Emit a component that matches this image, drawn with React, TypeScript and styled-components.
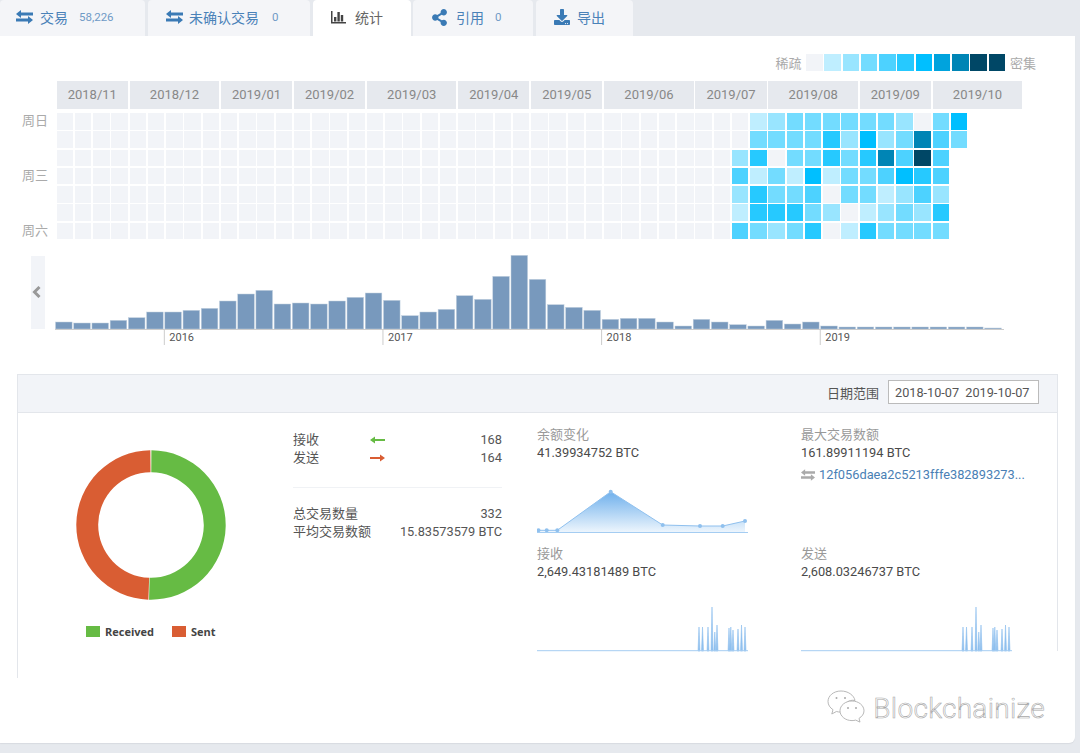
import React from "react";
import styled, { createGlobalStyle } from "styled-components";
import { FaShareAlt, FaDownload } from "react-icons/fa";

const Global = createGlobalStyle`
  html, body { margin: 0; padding: 0; background: #e6e9ee; }
  body { width: 1080px; height: 753px; overflow: hidden; font-family: Roboto, "Noto Sans CJK SC", sans-serif; font-size: 13px; color: #555; }
`;

const LEVELS = ["#f2f4f8", "#bfeeff", "#99e5ff", "#73dcff", "#4dd2ff", "#26c9ff", "#00bfff", "#00a3dd", "#0085b5", "#004766", "#004766"];
const CELL = 16.5;
const GAP = 1.75;

const Page = styled.div`
  width: 1080px;
  height: 753px;
  display: flex;
  flex-direction: column;
`;
const TabBar = styled.nav`
  display: flex;
  height: 36px;
`;
const Tab = styled.div<{ $w: number; $gap: number; $pad?: number; $active?: boolean }>`
  width: ${(p) => p.$w}px;
  margin-right: ${(p) => p.$gap}px;
  box-sizing: border-box;
  padding: 0 0 2px ${(p) => p.$pad ?? 18}px;
  display: flex;
  align-items: center;
  background: ${(p) => (p.$active ? "#fff" : "#f4f5f8")};
  color: ${(p) => (p.$active ? "#666" : "#4a82b8")};
  border-radius: 4px 4px 0 0;
  font-size: 14px;
  svg { flex: none; color: ${(p) => (p.$active ? "#444" : "#3a7ab5")}; }
`;
const TabLabel = styled.span<{ $m: number }>`
  margin-left: ${(p) => p.$m}px;
`;
const TabCount = styled.span<{ $m?: number }>`
  margin-left: ${(p) => p.$m ?? 11}px;
  font-size: 11.5px;
  color: #6f9ac6;
`;
const Card = styled.main`
  width: 1075px;
  height: 707px;
  background: #fff;
  border-radius: 0 0 6px 0;
  box-shadow: 0 1px 1px #d8dbe0;
`;
const LegendRow = styled.div`
  display: flex;
  justify-content: flex-end;
  align-items: center;
  gap: ${GAP}px;
  padding: 18px 39px 0 0;
  height: ${CELL}px;
  color: #aaa;
`;
const LegendText = styled.span<{ $side: "l" | "r" }>`
  margin-${(p) => (p.$side === "l" ? "right" : "left")}: 3px;
`;
const Cell = styled.div<{ $level: number }>`
  width: ${CELL}px;
  height: ${CELL}px;
  flex: none;
  background: ${(p) => LEVELS[p.$level]};
`;
const Months = styled.div`
  display: grid;
  grid-template-columns: repeat(53, ${CELL}px);
  column-gap: ${GAP}px;
  margin: 10.5px 0 0 56.7px;
  height: 27.5px;
`;
const Month = styled.div<{ $span: number }>`
  grid-column: span ${(p) => p.$span};
  background: #e6e9ee;
  color: #888;
  display: flex;
  align-items: center;
  justify-content: center;
  font-size: 13px;
`;
const Heat = styled.div`
  margin-top: 4.5px;
  display: flex;
  flex-direction: column;
  gap: ${GAP}px;
`;
const HeatRow = styled.div`
  display: flex;
  gap: ${GAP}px;
`;
const DayLabel = styled.div`
  width: ${56.7 - GAP}px;
  box-sizing: border-box;
  padding-left: 22px;
  line-height: ${CELL}px;
  color: #aaa;
  flex: none;
`;
const History = styled.section`
  display: flex;
  margin: 15.8px 0 0 31px;
`;
const PrevButton = styled.div`
  width: 14px;
  height: 73px;
  box-sizing: border-box;
  padding-right: 3px;
  margin: 1px 10px 0 0;
  background: #f2f4f8;
  color: #999;
  display: flex;
  align-items: center;
  justify-content: center;
`;
const Chart = styled.svg`
  display: block;
  text { font-family: Roboto, sans-serif; font-size: 11px; fill: #555; }
`;
const Panel = styled.section`
  width: 1041px;
  height: 304px;
  margin: 27px 0 0 17px;
  box-sizing: border-box;
  border-left: 1px solid #e3e6eb;
`;
const PanelHeader = styled.header`
  height: 39px;
  box-sizing: border-box;
  border: 1px solid #e3e6eb;
  border-left: 0;
  background: #f2f4f8;
  display: flex;
  align-items: center;
  justify-content: flex-end;
  gap: 9px;
  padding: 0 18px 2px 0;
`;
const DateInput = styled.input`
  width: 151px;
  height: 24px;
  box-sizing: border-box;
  border: 1px solid #bbb;
  background: #fff;
  padding: 0 0 0 6px;
  font: 12.7px Roboto, sans-serif;
  color: #555;
`;
const PanelBody = styled.div`
  display: flex;
  height: 238px;
  border-right: 1px solid #e3e6eb;
`;
const DonutColumn = styled.div`
  width: 275px;
  flex: none;
  padding: 37px 0 0 58px;
  box-sizing: border-box;
`;
const DonutSvg = styled.svg`
  display: block;
`;
const DonutLegend = styled.div`
  display: flex;
  align-items: center;
  margin: 24px 0 0 10px;
  font: 700 11px "Open Sans", sans-serif;
  color: #444;
`;
const Swatch = styled.i<{ $color: string }>`
  width: 14px;
  height: 11px;
  background: ${(p) => p.$color};
  margin-right: 5px;
`;
const SwatchLabel = styled.span`
  width: 67px;
`;
const StatsColumn = styled.div`
  width: 209px;
  flex: none;
  padding-top: 18px;
  box-sizing: border-box;
  line-height: 18px;
`;
const StatRow = styled.div`
  display: flex;
  align-items: center;
  justify-content: space-between;
`;
const StatLabel = styled.span`
  display: flex;
  align-items: center;
`;
const LabelBox = styled.span`
  width: 77px;
`;
const StatValue = styled.span`
  font-size: 12.8px;
`;
const Rule = styled.hr`
  border: 0;
  height: 1px;
  background: #f0f2f5;
  margin: 20px 0 17px;
`;
const Metrics = styled.div`
  margin-left: 35px;
  display: grid;
  grid-template-columns: 264px 255px;
  grid-auto-rows: 119px;
  padding-top: 13px;
  line-height: 18px;
`;
const Metric = styled.div``;
const MetricTitle = styled.div`
  color: #999;
`;
const MetricValue = styled.div`
  color: #4a4a4a;
  font-size: 12.8px;
`;
const LinkRow = styled.div`
  display: flex;
  align-items: center;
  gap: 4px;
  margin-top: 4px;
  color: #4a7fb5;
  font-size: 12.8px;
  white-space: nowrap;
  svg { color: #aaa; flex: none; }
`;
const Spark = styled.svg<{ $top: number }>`
  display: block;
  margin-top: ${(p) => p.$top}px;
`;
const Watermark = styled.div`
  display: flex;
  justify-content: flex-end;
  align-items: center;
  gap: 8px;
  margin-top: 12px;
  padding-right: 30px;
  height: 34px;
`;
const WatermarkText = styled.span`
  font: 300 28px Roboto, sans-serif;
  color: #fff;
  -webkit-text-stroke: 0.6px #a8a8a8;
  letter-spacing: 0.3px;
  margin-top: 3px;
`;

const Exchange = ({ w = 17, h = 14 }: { w?: number; h?: number }) => (
  <svg width={w} height={h} viewBox="0 0 17 14" fill="currentColor">
    <path d="M5 0v2.5h12v3H5V8L0 4zM12 6v2.5H0v3h12V14l5-4z" />
  </svg>
);
const Bars = () => (
  <svg width="15" height="14" viewBox="0 0 15 14" fill="currentColor">
    <path d="M0 1h1.5v11H15v1.5H0zM3 7h2.4v4.5H3zM6.4 2h2.4v9.5H6.4zM9.8 5h2.4v6.5H9.8z" />
  </svg>
);
const Chevron = () => (
  <svg width="9" height="12" viewBox="0 0 9 12" fill="none" stroke="currentColor" strokeWidth="3">
    <path d="M7.5 1L2.5 6l5 5" />
  </svg>
);
const ArrowL = () => (
  <svg width="15" height="8" viewBox="0 0 15 8" fill="#66bb44">
    <path d="M0 4l5-3.5V3h10v2H5v2.5z" />
  </svg>
);
const ArrowR = () => (
  <svg width="15" height="8" viewBox="0 0 15 8" fill="#d95d33">
    <path d="M15 4l-5-3.5V3H0v2h10v2.5z" />
  </svg>
);
const WeChat = () => (
  <svg width="38" height="33" viewBox="0 0 38 33" fill="#fff" stroke="#b0b0b0" strokeWidth="0.9">
    <path d="M14 1C6.5 1 1 5.8 1 11.5c0 3.4 2 6.2 5 8.2L4.8 24l4.6-2.5c1.4.4 3 .6 4.6.6 .7 0 1 0 1.6-.1C15 14 22 9 28 10.5 27 5.2 21 1 14 1z" />
    <path d="M25 11c-6.6 0-12 4.4-12 9.8s5.4 9.8 12 9.8c1.3 0 2.6-.2 3.7-.5l4.3 2-1-3.7c3-1.8 5-4.5 5-7.6C37 15.4 31.6 11 25 11z" />
    <circle cx="9.5" cy="8" r="1" fill="#aaa" stroke="none" />
    <circle cx="18" cy="8" r="1" fill="#aaa" stroke="none" />
    <circle cx="21" cy="18" r="1" fill="#aaa" stroke="none" />
    <circle cx="29" cy="18" r="1" fill="#aaa" stroke="none" />
  </svg>
);

const months: [string, number][] = [
  ["2018/11", 4], ["2018/12", 5], ["2019/01", 4], ["2019/02", 4], ["2019/03", 5], ["2019/04", 4],
  ["2019/05", 4], ["2019/06", 5], ["2019/07", 4], ["2019/08", 5], ["2019/09", 4], ["2019/10", 5],
];
const heat: number[][] = [
  [0, 1, 2, 3, 3, 3, 3, 3, 3, 2, 0, 3, 6],
  [0, 3, 3, 3, 3, 5, 2, 6, 2, 3, 8, 4, 3],
  [2, 5, 0, 3, 3, 5, 3, 5, 8, 4, 9, 4],
  [4, 1, 3, 1, 6, 1, 3, 3, 4, 6, 5, 4],
  [2, 5, 3, 3, 4, 0, 3, 3, 1, 2, 4, 2],
  [1, 5, 5, 5, 3, 2, 0, 1, 2, 3, 2, 5],
  [4, 3, 2, 3, 5, 0, 1, 5, 3, 3, 3, 3],
];
const dayNames = ["周日", "", "", "周三", "", "", "周六"];
const barTops = [216, 219, 219, 211, 203, 186, 186, 181, 175, 153, 132, 121, 162, 159, 162, 153, 142, 129, 151, 197, 186, 178, 137, 148, 79, 16, 88, 164, 172, 181, 208, 205, 205, 216, 228, 208, 216, 224, 228, 211, 222, 216, 228, 231, 231, 231, 231, 231, 231, 231, 231, 234];
const years: [string, number][] = [["2016", 6], ["2017", 18], ["2018", 30], ["2019", 42]];

const polar = (r: number, deg: number) => {
  const a = ((deg - 90) * Math.PI) / 180;
  return `${75 + r * Math.cos(a)} ${75 + r * Math.sin(a)}`;
};
const ring = (from: number, to: number, R: number, r: number) => {
  const large = to - from > 180 ? 1 : 0;
  return `M${polar(R, from)}A${R} ${R} 0 ${large} 1 ${polar(R, to)}L${polar(r, to)}A${r} ${r} 0 ${large} 0 ${polar(r, from)}Z`;
};

const balancePts: [number, number][] = [[538.5, 530.3], [546.7, 530.3], [557.3, 530.3], [610.7, 491.7], [662.7, 525], [700, 526], [722.7, 526], [745, 521]];
const spikes: [number, number][] = [[699, 627], [702.5, 627], [708, 627], [712, 607], [714.8, 632], [717, 625], [729, 628], [730.8, 627], [733, 630], [738, 629], [741.5, 625], [745, 627]];

const BalanceSpark = () => (
  <Spark $top={22} width="212" height="49" viewBox="537 484 212 49">
    <defs>
      <linearGradient id="balanceFill" x1="0" y1="0" x2="0" y2="1">
        <stop offset="0" stopColor="#6fb0ec" />
        <stop offset="1" stopColor="#eef6fd" />
      </linearGradient>
    </defs>
    <path d={`M538.5 532.5L${balancePts.map((p) => p.join(" ")).join("L")}L745 532.5Z`} fill="url(#balanceFill)" />
    <path d={`M${balancePts.map((p) => p.join(" ")).join("L")}`} fill="none" stroke="#8fc0ee" strokeWidth="1" />
    {balancePts.map((p) => (
      <circle key={p[0]} cx={p[0]} cy={p[1]} r="2" fill="#8fc0ee" />
    ))}
    <path d="M537 532.5H748" stroke="#a5cdf2" strokeWidth="1" />
  </Spark>
);
const SpikeSpark = () => (
  <Spark $top={19} width="212" height="52" viewBox="537 600 212 52">
    {spikes.map(([x, y]) => (
      <path key={x} d={`M${x - 1} 651L${x} ${y}L${x + 1} 651Z`} fill="#8fc0ee" stroke="#8fc0ee" strokeWidth="0.6" />
    ))}
    <path d="M537 650.7H748" stroke="#a5cdf2" strokeWidth="1" />
  </Spark>
);

export default function App() {
  return (
    <Page>
      <Global />
      <TabBar>
        <Tab $w={145} $gap={3} $pad={16}><Exchange /><TabLabel $m={7}>交易</TabLabel><TabCount>58,226</TabCount></Tab>
        <Tab $w={162} $gap={3}><Exchange /><TabLabel $m={6}>未确认交易</TabLabel><TabCount $m={13}>0</TabCount></Tab>
        <Tab $w={98} $gap={2} $active><Bars /><TabLabel $m={9}>统计</TabLabel></Tab>
        <Tab $w={120} $gap={3}><FaShareAlt size={17} /><TabLabel $m={8}>引用</TabLabel><TabCount>0</TabCount></Tab>
        <Tab $w={97} $gap={0}><FaDownload size={16} /><TabLabel $m={7}>导出</TabLabel></Tab>
      </TabBar>
      <Card>
        <LegendRow>
          <LegendText $side="l">稀疏</LegendText>
          {LEVELS.map((_, i) => <Cell key={i} $level={i} />)}
          <LegendText $side="r">密集</LegendText>
        </LegendRow>
        <Months>
          {months.map(([m, s]) => <Month key={m} $span={s}>{m}</Month>)}
        </Months>
        <Heat>
          {heat.map((row, r) => (
            <HeatRow key={r}>
              <DayLabel>{dayNames[r]}</DayLabel>
              {Array.from({ length: 37 }, (_, c) => <Cell key={c} $level={0} />)}
              {row.map((v, c) => <Cell key={c + 37} $level={v} />)}
            </HeatRow>
          ))}
        </Heat>
        <History>
          <PrevButton><Chevron /></PrevButton>
          <Chart width="960" height="92" viewBox="55 255 960 92">
            {barTops.map((t, i) => {
              const h = (237 - t) / 3;
              return (
                <rect key={i} x={55.5 + i * 18.22} y={329 - h} width={16.6} height={h} fill="#7899bd" stroke="#c3d1e0" strokeWidth="0.5" />
              );
            })}
            <path d="M55 329.5H1004" stroke="#ccc" strokeWidth="1" />
            {years.map(([y, i]) => {
              const x = 55 + i * 18.22;
              return (
                <g key={y}>
                  <path d={`M${x} 329V345`} stroke="#ccc" strokeWidth="1" />
                  <text x={x + 5} y={341}>{y}</text>
                </g>
              );
            })}
          </Chart>
        </History>
        <Panel>
          <PanelHeader>
            <span>日期范围</span>
            <DateInput readOnly value="2018-10-07  2019-10-07" />
          </PanelHeader>
          <PanelBody>
            <DonutColumn>
              <DonutSvg width="150" height="150" viewBox="0 0 150 150">
                <path d={ring(0.3, 181.5, 74.7, 52.8)} fill="#66bb44" />
                <path d={ring(182, 359.5, 74.7, 52.8)} fill="#d95d33" />
              </DonutSvg>
              <DonutLegend>
                <Swatch $color="#66bb44" /><SwatchLabel>Received</SwatchLabel>
                <Swatch $color="#d95d33" /><SwatchLabel>Sent</SwatchLabel>
              </DonutLegend>
            </DonutColumn>
            <StatsColumn>
              <StatRow><StatLabel><LabelBox>接收</LabelBox><ArrowL /></StatLabel><StatValue>168</StatValue></StatRow>
              <StatRow><StatLabel><LabelBox>发送</LabelBox><ArrowR /></StatLabel><StatValue>164</StatValue></StatRow>
              <Rule />
              <StatRow><span>总交易数量</span><StatValue>332</StatValue></StatRow>
              <StatRow><span>平均交易数额</span><StatValue>15.83573579 BTC</StatValue></StatRow>
            </StatsColumn>
            <Metrics>
              <Metric>
                <MetricTitle>余额变化</MetricTitle>
                <MetricValue>41.39934752 BTC</MetricValue>
                <BalanceSpark />
              </Metric>
              <Metric>
                <MetricTitle>最大交易数额</MetricTitle>
                <MetricValue>161.89911194 BTC</MetricValue>
                <LinkRow><Exchange w={14} h={12} /><span>12f056daea2c5213fffe382893273...</span></LinkRow>
              </Metric>
              <Metric>
                <MetricTitle>接收</MetricTitle>
                <MetricValue>2,649.43181489 BTC</MetricValue>
                <SpikeSpark />
              </Metric>
              <Metric>
                <MetricTitle>发送</MetricTitle>
                <MetricValue>2,608.03246737 BTC</MetricValue>
                <SpikeSpark />
              </Metric>
            </Metrics>
          </PanelBody>
        </Panel>
        <Watermark>
          <WeChat />
          <WatermarkText>Blockchainize</WatermarkText>
        </Watermark>
      </Card>
    </Page>
  );
}
